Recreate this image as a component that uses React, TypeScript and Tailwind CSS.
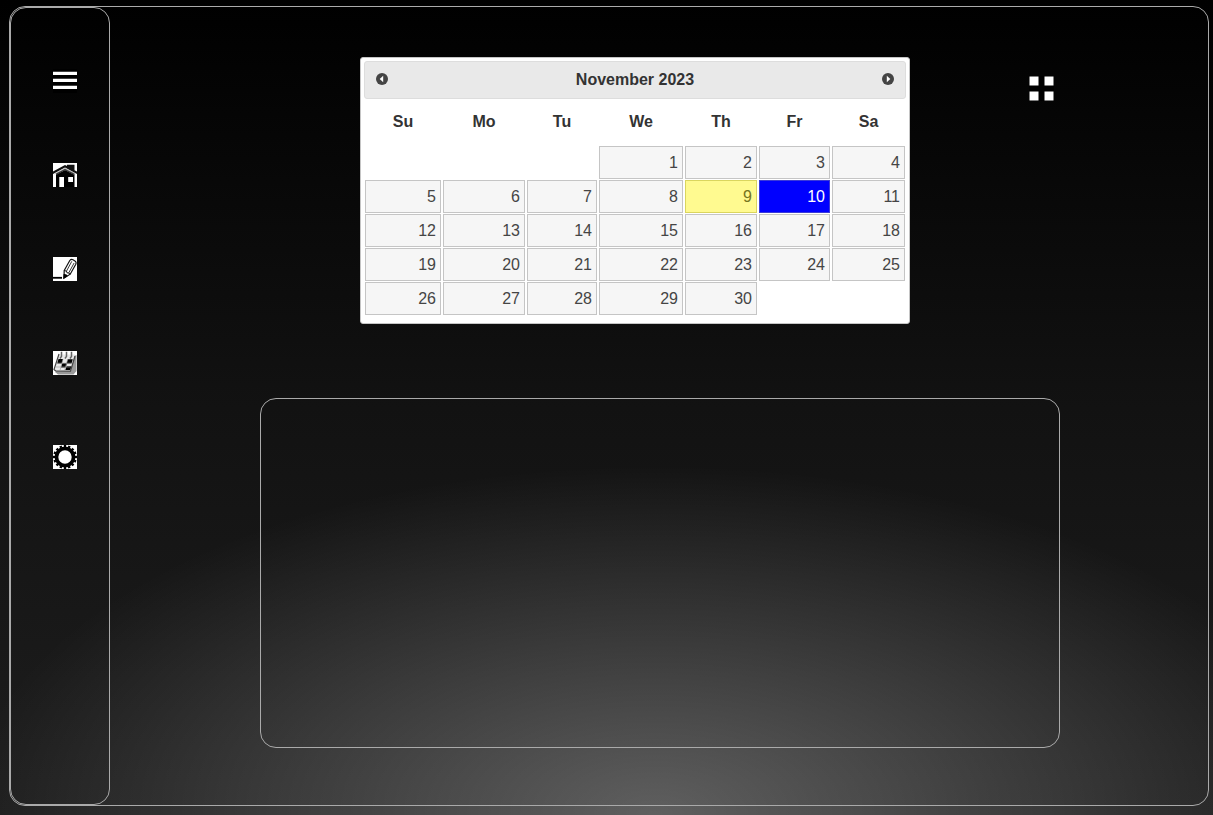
import { useState, type ReactNode } from 'react';

const columns = [
  { day: 'Su', width: 'w-[78px]' },
  { day: 'Mo', width: 'w-[84px]' },
  { day: 'Tu', width: 'w-[72px]' },
  { day: 'We', width: 'w-[86px]' },
  { day: 'Th', width: 'w-[74px]' },
  { day: 'Fr', width: 'w-[73px]' },
  { day: 'Sa', width: 'w-[75px]' },
];

const leadingBlanks = 3;
const daysInMonth = 30;
const today = 9;

const weeks = [0, 1, 2, 3, 4].map((week) =>
  columns.map((_, i) => {
    const date = week * 7 + i - leadingBlanks + 1;
    return date > 0 && date <= daysInMonth ? date : null;
  }),
);

function Icon({ children }: { children: ReactNode }) {
  return (
    <svg viewBox="0 0 24 24" className="block size-6" aria-hidden="true">
      {children}
    </svg>
  );
}

function MenuIcon() {
  return (
    <Icon>
      <rect width="24" height="24" fill="#000" />
      <path d="M0 2.7h24v3.2H0zM0 9.7h24v3.2H0zM0 16.7h24v3.2H0z" fill="#fff" />
    </Icon>
  );
}

function HomeIcon() {
  return (
    <Icon>
      <rect width="24" height="24" fill="#fff" />
      <path d="M0 8.600 12 2l2 1V1.800h7.500v5.400L24 8.600v2.400L12 4.600 0 11z" fill="#111" />
      <path d="M3 24V11.800L12 7l9.500 4.800V24z" fill="#000" />
      <path d="m3 10.200 9-4.800 9.500 4.800v2L12 7.200l-9 5z" fill="#333" />
      <path d="M1.500 11 12 5.600 22.500 11" fill="none" stroke="#aaa" strokeWidth=".6" />
      <path d="M6.300 14H11v10H6.300zM15.200 14H20v5h-4.800z" fill="#fff" />
    </Icon>
  );
}

function PencilIcon() {
  return (
    <Icon>
      <rect width="24" height="24" fill="#fff" />
      <path d="M0 20.800h9" stroke="#000" strokeWidth="1.800" />
      <path
        d="m11.200 13.500 5.600-10q1.200-1.500 3.200-.8l2.300 1.500q1.300 1 .5 3l-5.600 10-6.200 4z"
        fill="#fff"
        stroke="#111"
        strokeWidth="1.200"
      />
      <path d="m13.400 14.300 5.400-10M15.800 15.800l5.300-9.800" stroke="#222" strokeWidth=".9" />
      <path d="m11.200 13.500 2.200.6.6 1.700 2 .2 1 1.500" fill="none" stroke="#111" strokeWidth="1" />
      <path d="m10.600 17-.4 5 4.600-3q-1-2.500-4.200-2z" fill="#000" />
    </Icon>
  );
}

function PlannerIcon() {
  return (
    <Icon>
      <rect width="24" height="24" fill="#fff" />
      <path d="m2 21 3 2.500h15.500L23.500 20V4L21 5l-3 15z" fill="#999" />
      <path d="M6 3.500h16L17.500 19.500H1z" fill="#e8e8e8" />
      <path d="M6 3 1 18.500l2 1.700h14.500L22 5" fill="none" stroke="#444" strokeWidth="1.200" />
      <path
        d="M5.500 8h4.600l-1.300 4.500H4.200zM14.800 8.300h5l-1.300 4.200h-5zM9.300 12.200h4.700l-1.300 4.300H8zM13.600 15.300h4.800L17.200 19h-4.900z"
        fill="#000"
      />
      <path
        d="M4 12.200h14.500M3 16h14.500M10 8 7 19.500M14.800 8l-3.300 11.500"
        stroke="#999"
        strokeWidth=".6"
      />
      <path d="M8.500.8v4.500L7 7.500M13.500.8v4.500L12 7.500M18.500.8v4.500L17 7.500" fill="none" stroke="#666" strokeWidth="1.500" />
    </Icon>
  );
}

function SettingsIcon() {
  return (
    <Icon>
      <rect width="24" height="24" fill="#fff" />
      <circle cx="12" cy="12" r="8.600" fill="none" stroke="#000" strokeWidth="3.800" />
      <circle
        cx="12"
        cy="12"
        r="11"
        fill="none"
        stroke="#000"
        strokeWidth="2"
        pathLength="160"
        strokeDasharray="5.500 4.500"
        strokeDashoffset="2.750"
      />
    </Icon>
  );
}

const navItems = [
  { label: 'Menu', icon: <MenuIcon /> },
  { label: 'Home', icon: <HomeIcon /> },
  { label: 'Write', icon: <PencilIcon /> },
  { label: 'Planner', icon: <PlannerIcon /> },
  { label: 'Settings', icon: <SettingsIcon /> },
];

function Arrow({ path }: { path: string }) {
  return (
    <svg viewBox="0 0 12 12" className="block size-3" aria-hidden="true">
      <circle cx="6" cy="6" r="6" fill="#444" />
      <path d={path} fill="#fff" />
    </svg>
  );
}

function Calendar() {
  const [selected, setSelected] = useState(10);

  function dayClass(date: number) {
    if (date === selected) return 'border-[#3a3ad8] bg-[#0000ff] text-white';
    if (date === today) return 'border-[#dad55e] bg-[#fffa90] text-[#777620]';
    return 'border-[#c5c5c5] bg-[#f6f6f6] text-[#454545]';
  }

  return (
    <section
      aria-label="Calendar"
      className="w-[550px] rounded-[3px] border border-[#c5c5c5] bg-white px-[3px] pt-[3px] pb-2 text-[#333333]"
    >
      <header className="flex h-[38px] items-center justify-between rounded-[3px] border border-[#dddddd] bg-[#e9e9e9] px-[11px]">
        <button type="button" aria-label="Previous month" className="-mt-0.5">
          <Arrow path="M7.200 2.700v6.600L3.700 6z" />
        </button>
        <h2 className="text-base leading-6 font-bold">November 2023</h2>
        <button type="button" aria-label="Next month" className="-mt-0.5">
          <Arrow path="M4.800 2.700v6.600L8.300 6z" />
        </button>
      </header>
      <table className="w-full table-fixed border-collapse">
        <thead>
          <tr className="h-[46px]">
            {columns.map(({ day, width }) => (
              <th key={day} scope="col" className={`${width} p-0 text-center font-bold`}>
                {day}
              </th>
            ))}
          </tr>
        </thead>
        <tbody>
          {weeks.map((week, row) => (
            <tr key={row}>
              {week.map((date, i) => (
                <td key={i} className="h-[34px] px-px pt-px pb-0">
                  {date && (
                    <button
                      type="button"
                      aria-pressed={date === selected}
                      onClick={() => setSelected(date)}
                      className={`block h-[33px] w-full border px-1 text-right text-base leading-6 ${dayClass(date)}`}
                    >
                      {date}
                    </button>
                  )}
                </td>
              ))}
            </tr>
          ))}
        </tbody>
      </table>
    </section>
  );
}

export default function App() {
  return (
    <div className="flex min-h-screen flex-col bg-[radial-gradient(ellipse_690px_350px_at_54%_100%,rgba(255,255,255,0.29),rgba(255,255,255,0)),linear-gradient(to_bottom,#000000,#121212_50%,#1e1e1e_100%)] pt-[6px] pr-1 pb-[9px] pl-[9px] font-['Liberation_Sans',Arial,sans-serif]">
      <div className="flex grow rounded-2xl border border-[#aaaaaa]">
        <nav aria-label="Main" className="w-[100px] shrink-0 rounded-2xl border border-[#aaaaaa] pt-[61px]">
          <ul className="flex flex-col gap-[70px] pl-[42px]">
            {navItems.map(({ label, icon }) => (
              <li key={label}>
                <a href="#" aria-label={label} className="block size-6">
                  {icon}
                </a>
              </li>
            ))}
          </ul>
        </nav>
        <main className="flex grow flex-col items-center pt-[50px] pb-[57px] pl-0.5">
          <div className="flex w-full max-w-[800px] items-start justify-between pr-[6px] pl-[100px]">
            <Calendar />
            <button type="button" aria-label="Apps" className="mt-[19px]">
              <svg viewBox="0 0 25 25" className="block size-[25px]" aria-hidden="true">
                <rect width="25" height="25" fill="#000" />
                <path
                  d="M.5.500h9v9h-9zM15.500.500h9v9h-9zM.5 15.500h9v9h-9zM15.500 15.500h9v9h-9z"
                  fill="#fff"
                />
              </svg>
            </button>
          </div>
          <section
            aria-label="Notes"
            className="mt-[74px] min-h-[350px] w-full max-w-[800px] grow rounded-2xl border border-[#aaaaaa]"
          />
        </main>
      </div>
    </div>
  );
}
